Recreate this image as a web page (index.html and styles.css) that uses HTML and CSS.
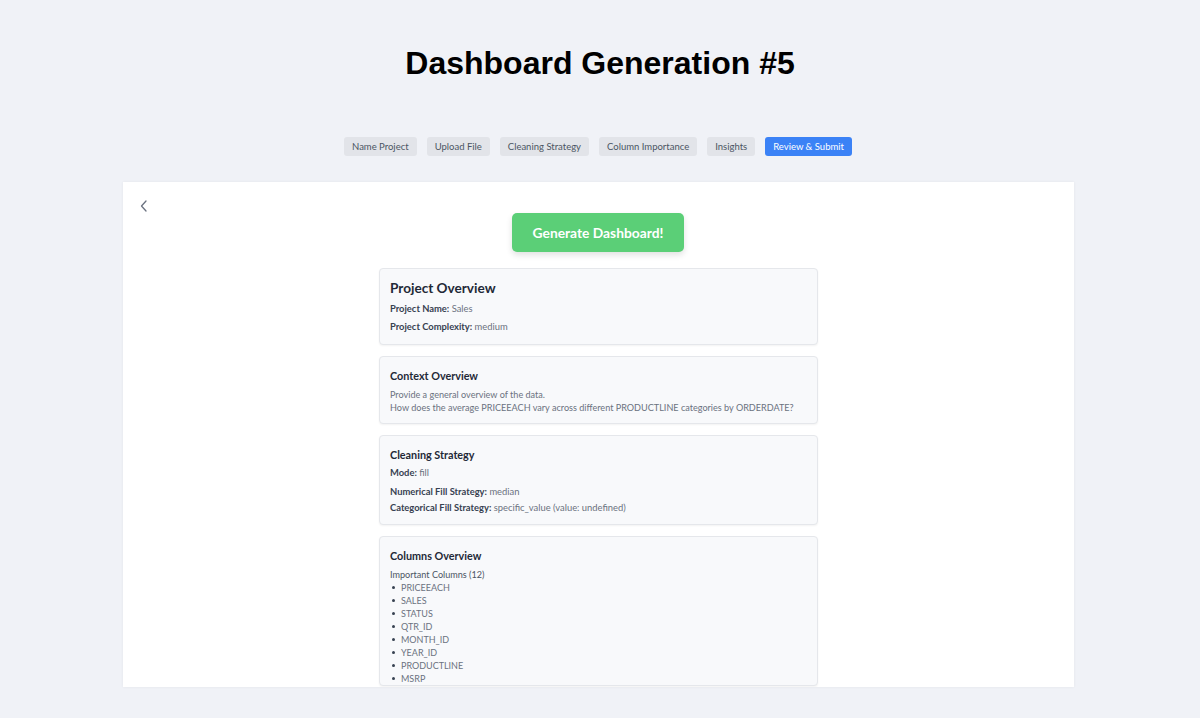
FILE: index.html
```html
<!DOCTYPE html>
<html lang="en">
<head>
<meta charset="utf-8">
<title>Dashboard Generation #5</title>
<link rel="stylesheet" href="styles.css">
</head>
<body>
<h1 class="page-title">Dashboard Generation #5</h1>
<nav class="steps">
  <span class="step">Name Project</span>
  <span class="step">Upload File</span>
  <span class="step">Cleaning Strategy</span>
  <span class="step">Column Importance</span>
  <span class="step">Insights</span>
  <span class="step step-active">Review &amp; Submit</span>
</nav>
<main class="panel">
  <div class="back-row">
    <svg class="back" width="8" height="12" viewBox="0 0 8 12"><path d="M6 1 L1.5 6 L6 11" fill="none" stroke="#6b7280" stroke-width="1.3" stroke-linecap="round" stroke-linejoin="round"/></svg>
  </div>
  <button class="generate">Generate Dashboard!</button>
  <div class="cards">
    <section class="card card-project">
      <h2 class="card-title-lg">Project Overview</h2>
      <p class="row"><b>Project Name:</b> Sales</p>
      <p class="row"><b>Project Complexity:</b> medium</p>
    </section>
    <section class="card card-context">
      <h3 class="card-title">Context Overview</h3>
      <p class="plain">Provide a general overview of the data.<br>How does the average PRICEEACH vary across different PRODUCTLINE categories by ORDERDATE?</p>
    </section>
    <section class="card card-cleaning">
      <h3 class="card-title">Cleaning Strategy</h3>
      <p class="row"><b>Mode:</b> fill</p>
      <p class="row row-gap"><b>Numerical Fill Strategy:</b> median</p>
      <p class="row row-tight"><b>Categorical Fill Strategy:</b> specific_value (value: undefined)</p>
    </section>
    <section class="card card-columns">
      <h3 class="card-title">Columns Overview</h3>
      <p class="plain">Important Columns (12)</p>
      <ul class="cols">
        <li>PRICEEACH</li>
        <li>SALES</li>
        <li>STATUS</li>
        <li>QTR_ID</li>
        <li>MONTH_ID</li>
        <li>YEAR_ID</li>
        <li>PRODUCTLINE</li>
        <li>MSRP</li>
      </ul>
    </section>
  </div>
</main>
</body>
</html>
```
FILE: styles.css
```css
html, body {
  margin: 0;
  padding: 0;
}
body {
  background: #f0f2f7;
  font-family: "Lato", "Noto Sans", sans-serif;
  height: 718px;
  overflow: hidden;
}
.page-title {
  margin: 0;
  padding-top: 45px;
  font-family: "Liberation Sans", Arial, sans-serif;
  font-weight: bold;
  font-size: 32px;
  line-height: 37px;
  text-align: center;
  color: #000;
}
.steps {
  display: flex;
  justify-content: center;
  gap: 10px;
  margin-top: 55px;
  margin-left: -4px;
}
.step {
  display: inline-flex;
  align-items: center;
  height: 19px;
  padding: 0 8px;
  border-radius: 3px;
  background: #e2e4e9;
  color: #4b5563;
  font-size: 9.5px;
}
.step-active {
  background: #3b82f6;
  color: #fff;
}
.panel {
  width: 951px;
  height: 505px;
  margin: 26px 0 0 123px;
  background: #fff;
  box-shadow: 0 0 3px rgba(0,0,0,0.06);
  overflow: hidden;
  box-sizing: border-box;
  padding: 18px 0 0 0;
}
.back-row {
  height: 13px;
  padding-left: 17px;
}
.back {
  display: block;
}
.generate {
  display: block;
  margin: 0 0 0 389px;
  width: 172px;
  height: 39px;
  border: none;
  border-radius: 5px;
  background: #5bcf77;
  color: #fff;
  font-family: "Lato", "Noto Sans", sans-serif;
  font-size: 13.8px;
  font-weight: 700;
  box-shadow: 0 3px 6px rgba(0,0,0,0.12);
}
.cards {
  width: 439px;
  margin: 16px 0 0 256px;
  display: flex;
  flex-direction: column;
  gap: 11px;
}
.card {
  background: #f8f9fb;
  border: 1px solid #e5e7eb;
  border-radius: 4px;
  box-shadow: 0 1px 2px rgba(0,0,0,0.05);
  padding: 0 10px;
  box-sizing: border-box;
}
.card-project { height: 77px; padding-top: 11px; }
.card-context { height: 68px; padding-top: 11px; }
.card-cleaning { height: 90px; padding-top: 11px; }
.card-columns { padding-top: 11px; }
.card-title-lg {
  margin: 0;
  font-size: 13.6px;
  font-weight: 700;
  color: #1f2937;
  line-height: 17px;
}
.card-title {
  margin: 0;
  font-size: 10.8px;
  font-weight: 700;
  color: #1f2937;
  line-height: 15px;
}
.row {
  margin: 5px 0 0 0;
  font-size: 9.4px;
  line-height: 13px;
  color: #6b7280;
}
.card-project .row + .row { margin-top: 5px; }
.row b {
  color: #374151;
  font-weight: 700;
}
.card-cleaning .row:first-of-type { margin-top: 4px; }
.row-gap { margin-top: 6px; }
.row.row-tight { margin-top: 3px; }
.plain {
  margin: 5px 0 0 0;
  font-size: 9.1px;
  line-height: 13px;
  color: #6b7280;
  white-space: nowrap;
}
.card-columns .plain { color: #4b5563; }
.cols {
  margin: 0;
  padding: 0 0 0 11px;
  font-size: 9px;
  line-height: 13px;
  color: #6b7280;
  list-style: none;
}
.cols li {
  position: relative;
}
.cols li::before {
  content: "";
  position: absolute;
  left: -9px;
  top: 5px;
  width: 3px;
  height: 3px;
  border-radius: 50%;
  background: #374151;
}
```
